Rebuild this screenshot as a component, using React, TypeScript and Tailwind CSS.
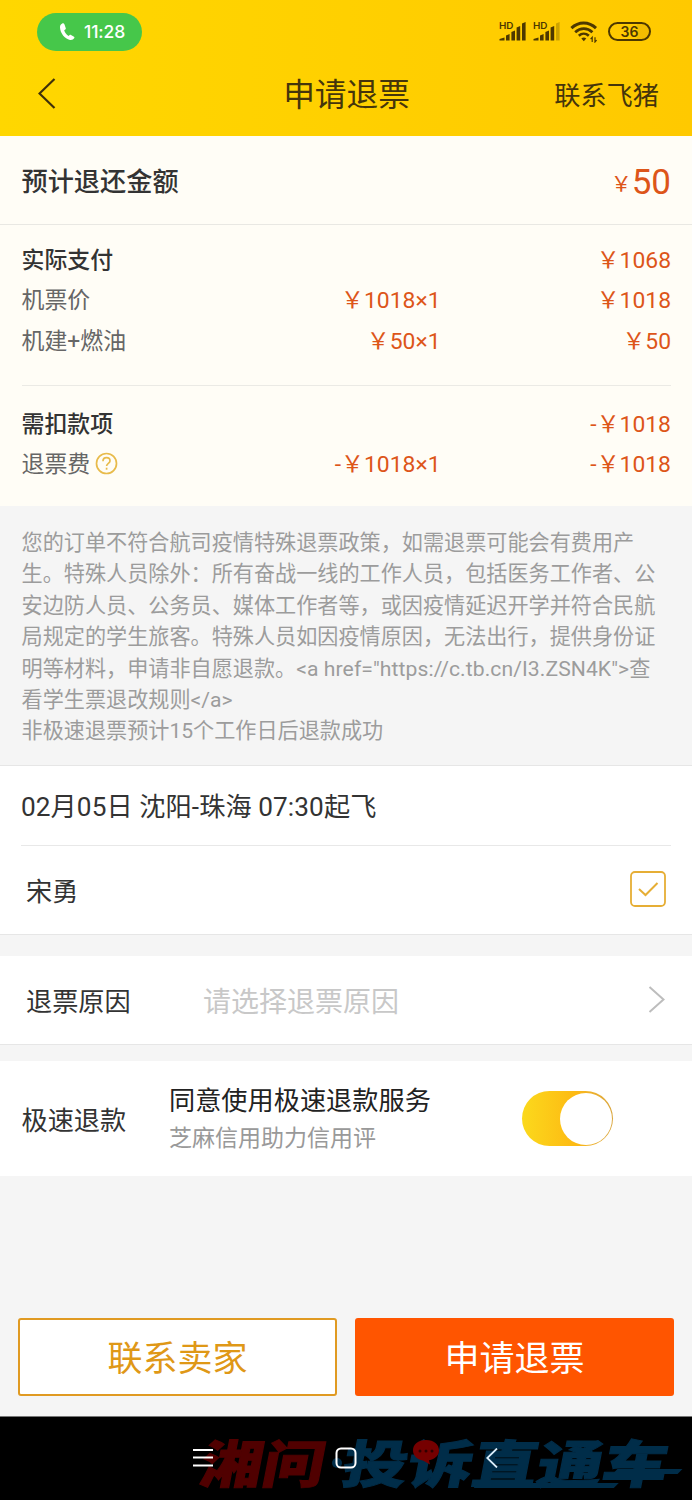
import type { ReactNode } from "react";

type Tier = "solid" | "light";

function SignalIcon({ last }: { last: Tier }) {
  return (
    <svg width="29" height="24" viewBox="0 0 29 24" fill="#4d3800">
      <text x="0" y="8.500" fontSize="9.500" fontWeight="600" fontFamily="Inter, sans-serif" textLength="14.500" lengthAdjust="spacingAndGlyphs">
        HD
      </text>
      <path d="M.5 20.500v-1.500l5-1.500v3z" />
      <path d="M7 20.500v-5l3.600-1.500v6.500z" />
      <path d="M12.400 20.500V12l3.600-1.500v10z" />
      <path d="M17.600 20.500V7.500L21.200 6v14.500z" />
      <path d="M23 20.500V3.500L26.600 2v18.500z" opacity={last === "light" ? 0.28 : 1} />
    </svg>
  );
}

function WifiIcon() {
  return (
    <svg width="28" height="22" viewBox="0 0 28 22" fill="none" stroke="#4d3800">
      <path d="M1.400 7.200C8.600.4 18.800.4 26 7.200" strokeWidth="3" />
      <path d="M5.200 11.200c5.200-4.800 12-4.800 17.200 0" strokeWidth="2.800" />
      <path d="M8.800 14.800c3-2.800 7-2.800 10 0" strokeWidth="2.600" />
      <path d="M11.300 17.400a4 4 0 0 1 5 0l-2.500 2.800z" fill="#4d3800" stroke="none" />
      <path d="M22.200 21v-4.600l-1.600 1.800M25 16.200V21l1.600-1.800" strokeWidth="1.200" />
    </svg>
  );
}

function StatusBar() {
  return (
    <div className="flex h-[63px] items-center justify-between pl-[37px] pr-[41px]">
      <div className="flex h-[38px] w-[105px] items-center rounded-full bg-[#46c74a] pl-[22px] text-white">
        <svg width="16" height="18" viewBox="0 0 16 18" fill="#fff">
          <path d="M3.200.5C1.700 1.200.9 2.600 1 4.400c.3 5.600 4.600 11.300 10 12.500 1.800.3 3.400-.3 4.300-1.800.3-.5.2-1-.3-1.300l-3-1.900c-.5-.3-1-.2-1.400.2l-.8.9C7.500 12 5.800 9.600 5.200 7.300l1.100-.8c.5-.3.6-.8.5-1.300L5.500 1.400C5.100.4 4.200 0 3.200.5z" />
        </svg>
        <span className="ml-[9px] font-['Inter',sans-serif] text-[17.500px] font-medium leading-[38px] tracking-[-0.1px]">
          11:28
        </span>
      </div>
      <div className="flex items-center">
        <SignalIcon last="solid" />
        <div className="ml-[5.500px]">
          <SignalIcon last="light" />
        </div>
        <div className="ml-[8px] pt-px">
          <WifiIcon />
        </div>
        <div className="ml-[10px] flex h-[19px] w-[43px] items-center justify-center rounded-full border-2 border-[#4d3800] bg-linear-to-r from-transparent from-70% to-[#e0a800]/40 to-70% font-['Inter',sans-serif] text-[14px] font-semibold leading-none text-[#4d3800]">
          36
        </div>
      </div>
    </div>
  );
}

function TitleBar() {
  return (
    <div className="grid h-[73px] grid-cols-[1fr_auto_1fr] items-start pl-[34px] pr-[33px]">
      <svg className="ml-[4px] mt-[15px]" width="18" height="31" viewBox="0 0 18 31" fill="none" stroke="#3f300a" strokeWidth="2.200">
        <path d="M16.500 1L1.500 15.500l15 14.500" />
      </svg>
      <h1 className="text-[31.700px] leading-[66px] text-[#45350b]">申请退票</h1>
      <span className="text-right text-[26.200px] leading-[67px] text-[#45350b]">联系飞猪</span>
    </div>
  );
}

function PriceRow({ label, unit, total, strong }: { label: ReactNode; unit?: string; total: string; strong?: boolean }) {
  return (
    <div className="flex h-[40.500px] items-center text-[22.900px] leading-[40px]">
      <div className={strong ? "flex w-[200px] items-center font-medium text-[#333]" : "flex w-[200px] items-center text-[#666]"}>
        {label}
      </div>
      <div className="w-[219px] text-right text-[#dd5519]">{unit}</div>
      <div className="flex-1 text-right text-[#dd5519]">{total}</div>
    </div>
  );
}

function RefundSummary() {
  return (
    <section className="h-[370px] bg-[#fffdf6]">
      <div className="flex h-[89px] items-center justify-between border-b border-[#e9e8e3] pl-[21.500px] pr-[21px]">
        <h2 className="pt-[5px] text-[26.200px] font-medium leading-[83px] text-[#333]">预计退还金额</h2>
        <div className="flex items-end pt-[4px] text-[#dd5519]">
          <span className="mb-[5px] text-[21px] leading-none">￥</span>
          <span className="text-[35px] leading-none">50</span>
        </div>
      </div>
      <div className="pl-[21.500px] pr-[21px]">
        <div className="h-[161px] border-b border-[#ebeae5] pt-[15.500px]">
          <PriceRow strong label="实际支付" total="￥1068" />
          <PriceRow label="机票价" unit="￥1018×1" total="￥1018" />
          <PriceRow label="机建+燃油" unit="￥50×1" total="￥50" />
        </div>
        <div className="pt-[18.500px]">
          <PriceRow strong label="需扣款项" total="-￥1018" />
          <PriceRow
            label={
              <>
                退票费
                <svg className="mb-[3px] ml-[5px]" width="23" height="23" viewBox="0 0 23 23" fill="none" stroke="#e8bb4b" strokeWidth="1.700">
                  <circle cx="11.500" cy="11.500" r="10" />
                  <path d="M8 9.200c0-2.100 1.500-3.500 3.500-3.500S15 7 15 8.900c0 2.400-3.400 2.500-3.400 5.100" />
                  <path d="M11.600 15.700v2" />
                </svg>
              </>
            }
            unit="-￥1018×1"
            total="-￥1018"
          />
        </div>
      </div>
    </section>
  );
}

function Notice() {
  return (
    <section className="h-[259px] whitespace-nowrap pl-[21.500px] pt-[21px] text-[21.130px] leading-[31.400px] text-[#9c9c9c]">
      <p>您的订单不符合航司疫情特殊退票政策，如需退票可能会有费用产</p>
      <p>生。特殊人员除外：所有奋战一线的工作人员，包括医务工作者、公</p>
      <p>安边防人员、公务员、媒体工作者等，或因疫情延迟开学并符合民航</p>
      <p>局规定的学生旅客。特殊人员如因疫情原因，无法出行，提供身份证</p>
      <p>
        明等材料，申请非自愿退款。
        <span className="tracking-[0.080px]">{'<a href="https://c.tb.cn/I3.ZSN4K">'}</span>查
      </p>
      <p>看学生票退改规则{"</a>"}</p>
      <p>非极速退票预计15个工作日后退款成功</p>
    </section>
  );
}

function Passenger() {
  return (
    <section className="h-[170px] border-y border-[#e6e6e6] bg-white">
      <div className="mx-[21px] h-[80px] border-b border-[#e8e8e8] pt-[2px] text-[26.200px] leading-[78px] tracking-[0.080px] text-[#333]">
        02月05日 沈阳-珠海 07:30起飞
      </div>
      <div className="flex h-[88px] items-center justify-between px-[26px] text-[26.200px] text-[#333]">
        <span className="pt-[4px] leading-[84px]">宋勇</span>
        <svg className="mb-[2px]" width="36" height="36" viewBox="0 0 36 36" fill="none" stroke="#e6ae35">
          <rect x="1" y="1" width="34" height="34" rx="4" strokeWidth="1.800" />
          <path d="M9 18l6.500 6L27.500 12" strokeWidth="2" />
        </svg>
      </div>
    </section>
  );
}

function Reason() {
  return (
    <section className="mt-[21px] flex h-[89px] items-center border-b border-[#e6e6e6] bg-white pl-[26px] pr-[27px]">
      <span className="w-[177px] pt-[4px] text-[26.200px] leading-[84px] text-[#333]">退票原因</span>
      <span className="flex-1 pt-[5px] text-[28px] leading-[83px] text-[#c8c8c8]">请选择退票原因</span>
      <svg className="mb-[2px]" width="17" height="27" viewBox="0 0 17 27" fill="none" stroke="#bdbdbd" strokeWidth="2">
        <path d="M1.500 1L15.500 13.500 1.500 26" />
      </svg>
    </section>
  );
}

function FastRefund() {
  return (
    <section className="mt-[16px] flex h-[115px] bg-white pl-[21.500px]">
      <span className="w-[147.500px] pt-[2px] text-[26.200px] leading-[116px] text-[#333]">极速退款</span>
      <div className="w-[353px] pt-[21px]">
        <p className="text-[26.200px] leading-[38px] text-[#222]">同意使用极速退款服务</p>
        <p className="text-[23px] leading-[38px] text-[#999]">芝麻信用助力信用评</p>
      </div>
      <div className="mt-[30px] flex h-[55px] w-[91px] justify-end rounded-full bg-linear-to-r from-[#fbd91c] via-[#fdb913] via-60% to-[#d9a53c] p-[1.500px]">
        <div className="size-[52px] rounded-full bg-white" />
      </div>
    </section>
  );
}

function Actions() {
  return (
    <section className="mt-[142px] flex h-[98px] gap-[18px] px-[18px]">
      <button className="h-[77.500px] w-[319px] rounded-[3px] border-2 border-[#e09a22] bg-white pt-[7px] text-[35px] leading-[66px] text-[#df9817]">
        联系卖家
      </button>
      <button className="h-[77.500px] w-[319px] rounded-[3px] bg-[#ff5500] pt-[7px] text-[35px] leading-[70px] text-white">
        申请退票
      </button>
    </section>
  );
}

function Watermark() {
  return (
    <svg
      className="absolute inset-0"
      width="692"
      height="83"
      viewBox="0 0 692 83"
      fontFamily="'Noto Sans CJK SC', sans-serif"
      fontWeight="900"
      fontSize="51"
    >
      <g transform="translate(0 70) skewX(-11)">
        <text x="197" y="-4" fill="#500000" stroke="#500000" textLength="124" lengthAdjust="spacingAndGlyphs">
          湘问
        </text>
        <text x="339" y="-4" fill="#002d49" stroke="#002d49" textLength="325" lengthAdjust="spacingAndGlyphs">
          投诉直通车
        </text>
        <path d="M474 1h140l4-5H476zM610-13h65l4-5h-65z" fill="#002d49" />
      </g>
      <circle cx="337" cy="46" r="5" fill="#002d49" />
      <path d="M426 23c-8 0-13 4.500-13 10.500 0 5 4 9 10 10l7 4-1-4.300c6-1 10-4.800 10-9.700 0-6-5-10.500-13-10.500z" fill="#750000" />
      <g fill="#300000">
        <circle cx="420" cy="34" r="1.500" />
        <circle cx="426" cy="34" r="1.500" />
        <circle cx="432" cy="34" r="1.500" />
      </g>
    </svg>
  );
}

function SystemNav() {
  return (
    <nav className="relative h-[84px] border-t border-[#777] bg-black">
      <Watermark />
      <div className="relative flex h-[82px] items-center pl-[193px]">
        <svg width="20" height="20" viewBox="0 0 20 20" stroke="#fff" strokeWidth="2">
          <path d="M0 2h20M0 9.500h20M0 17.500h20" />
        </svg>
        <svg className="ml-[122px]" width="22" height="22" viewBox="0 0 22 22" fill="none" stroke="#fff" strokeWidth="2">
          <rect x="1.500" y="1.500" width="19" height="19" rx="4.500" />
        </svg>
        <svg className="ml-[129px]" width="12" height="20" viewBox="0 0 12 20" fill="none" stroke="#dceefa" strokeWidth="1.800">
          <path d="M11 .5L1.200 10 11 19.500" />
        </svg>
      </div>
    </nav>
  );
}

export default function App() {
  return (
    <div className="h-[1500px] w-[692px] overflow-hidden bg-[#f5f5f5] font-['Roboto','Noto_Sans_CJK_SC',sans-serif]">
      <header className="h-[136px] bg-linear-to-r from-[#ffd700] to-[#ffc900]">
        <StatusBar />
        <TitleBar />
      </header>
      <RefundSummary />
      <Notice />
      <Passenger />
      <Reason />
      <FastRefund />
      <Actions />
      <SystemNav />
    </div>
  );
}
